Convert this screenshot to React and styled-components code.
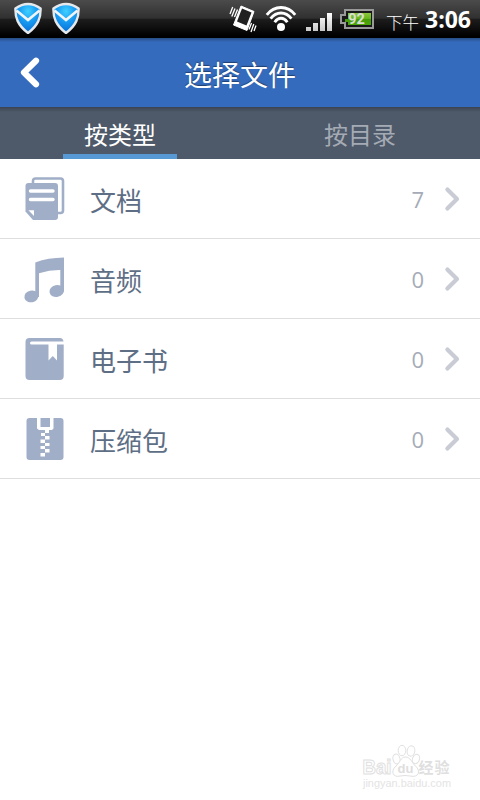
import styled, { createGlobalStyle } from "styled-components"

const files = [
    { name: "文档", count: 7, icon: DocumentIcon },
    { name: "音频", count: 0, icon: MusicIcon },
    { name: "电子书", count: 0, icon: BookIcon },
    { name: "压缩包", count: 0, icon: ZipIcon },
]

export default function App() {
    return (
        <>
            <GlobalStyle />
            <Screen>
                <StatusBar />

                <Header>
                    <BackButton aria-label="返回">
                        <svg width="22" height="34" viewBox="0 0 22 34">
                            <path d="M17 4.700L5 16.500L17 28.300" fill="none" stroke="#fff" strokeWidth="6.200" strokeLinecap="round" strokeLinejoin="round" />
                        </svg>
                    </BackButton>
                    <Title>选择文件</Title>
                </Header>

                <Tabs>
                    <Tab $active>按类型</Tab>
                    <Tab>按目录</Tab>
                </Tabs>

                <FileList>
                    {files.map(({ name, count, icon: Icon }) => (
                        <FileRow key={name}>
                            <Icon />
                            <FileName>{name}</FileName>
                            <FileCount>{count}</FileCount>
                            <Chevron />
                        </FileRow>
                    ))}
                </FileList>

                <Watermark />
            </Screen>
        </>
    )
}

function StatusBar() {
    return (
        <StatusRow>
            <Notifications>
                <Shield id="shieldA" />
                <Shield id="shieldB" />
            </Notifications>
            <VibrateIcon />
            <WifiIcon />
            <SignalIcon />
            <Battery />
            <Period>下午</Period>
            <Clock>3:06</Clock>
        </StatusRow>
    )
}

function Shield({ id }) {
    return (
        <svg width="30" height="32" viewBox="0 0 30 32">
            <defs>
                <radialGradient id={id} cx="50%" cy="25%" r="65%">
                    <stop offset="0" stopColor="#3fd0ff" />
                    <stop offset="0.5" stopColor="#1aa0f5" />
                    <stop offset="1" stopColor="#0a78dc" />
                </radialGradient>
            </defs>
            <path
                d="M15 2C11 2 6.500 3.500 2.400 6.500C2.200 15.500 4.500 23 15 31C25.500 23 27.800 15.500 27.600 6.500C23.500 3.500 19 2 15 2Z"
                fill={`url(#${id})`} stroke="#e6e9ec" strokeWidth="2.400" strokeLinejoin="round"
            />
            <path d="M3.500 8.500L15 18L26.500 8.500" fill="none" stroke="#f2f5f7" strokeWidth="2.600" />
        </svg>
    )
}

function VibrateIcon() {
    return (
        <svg width="28" height="28" viewBox="0 0 28 28">
            <path d="M12 1L25 6.500L18 25.500L4.500 20Z" fill="#fff" stroke="#fff" strokeWidth="1" strokeLinejoin="round" />
            <path d="M13 3.500L22.500 7.600L17.500 20.500L8 16.500Z" fill="#202020" />
            <path d="M3.700 2L1 9M6 3.500L2.800 11.500M8.500 4.500L5.500 12M22.500 18L20 24.500M24.800 19L22 27M27 20.500L25 26" fill="none" stroke="#fff" strokeWidth="1.300" />
        </svg>
    )
}

function WifiIcon() {
    return (
        <svg width="32" height="28" viewBox="0 0 32 28">
            <g fill="none" stroke="#fff" strokeWidth="2.900">
                <path d="M1.800 9.800C9.500 .1 22.500 .1 30.200 9.800" />
                <path d="M5.600 13.600C11.500 6.100 20.500 6.100 26.400 13.600" />
                <path d="M9.700 17.200C13.200 12 18.800 12 22.300 17.200" />
            </g>
            <circle cx="16" cy="22" r="4" fill="#fff" />
        </svg>
    )
}

function SignalIcon() {
    return (
        <svg width="28" height="20" viewBox="0 0 28 20">
            <defs>
                <linearGradient id="bars" x1="0" x2="0" y1="0" y2="1">
                    <stop offset="0" stopColor="#fff" />
                    <stop offset="1" stopColor="#c8c8c8" />
                </linearGradient>
            </defs>
            <path d="M1 15h5v4h-5zM8 11h5v8h-5zM15 6h5v13h-5zM22 1h5v18h-5z" fill="url(#bars)" />
        </svg>
    )
}

function Battery() {
    return (
        <svg width="34" height="20" viewBox="0 0 34 20">
            <defs>
                <linearGradient id="charge" x1="0" x2="0" y1="0" y2="1">
                    <stop offset="0" stopColor="#8cc63f" />
                    <stop offset="0.48" stopColor="#64b51b" />
                    <stop offset="0.5" stopColor="#469b08" />
                    <stop offset="1" stopColor="#4aa70a" />
                </linearGradient>
            </defs>
            <path d="M5 1H33V19H5V14H1V6H5Z" fill="#181818" stroke="#999" strokeWidth="2" />
            <path d="M8 4H31V16H8V13H5V10H8Z" fill="url(#charge)" />
            <text x="16.500" y="15" textAnchor="middle" fontFamily="Roboto, sans-serif" fontSize="14.500" fontWeight="700" fill="#d8ddd4">92</text>
        </svg>
    )
}

function DocumentIcon() {
    return (
        <FileIcon viewBox="0 0 42 44">
            <path d="M9 6V4Q9 1.500 11.500 1.500H36.500Q39 1.500 39 4V33.500Q39 36 36.500 36H34" fill="none" stroke="#a1aec7" strokeWidth="2.600" />
            <path d="M4.500 6H31Q34 6 34 9V40Q34 43 31 43H9L1.500 34.500V9Q1.500 6 4.500 6Z" />
            <path d="M6.500 14H29M6.500 22.500H29" stroke="#fff" strokeWidth="3.400" strokeLinecap="round" />
            <path d="M4.500 33.200H10V39Z" fill="#fff" />
        </FileIcon>
    )
}

function MusicIcon() {
    return (
        <FileIcon viewBox="0 0 42 44">
            <path d="M11.300 5.500Q24 .8 40 .6V34.500H36.300V13Q26 12.800 15 16.200V40H11.300Z" />
            <ellipse cx="7.400" cy="39.400" rx="7.100" ry="5.900" transform="rotate(-12 7.400 39.400)" />
            <ellipse cx="32.700" cy="34" rx="7.300" ry="5.900" transform="rotate(-12 32.700 34)" />
        </FileIcon>
    )
}

function BookIcon() {
    return (
        <FileIcon viewBox="0 0 42 44">
            <path d="M5.500 1H36Q39 1 39.500 4.500H7.500Q6 4.500 6 6Q6 7.500 7.500 7.500H24.500V23.500L28.800 19L33 23.500V7.500H39.700V39Q39.700 43 35.700 43H5.500Q1.500 43 1.500 39V5Q1.500 1 5.500 1Z" />
        </FileIcon>
    )
}

function ZipIcon() {
    return (
        <FileIcon viewBox="0 0 42 44">
            <rect x="2.500" y="1" width="37" height="42" rx="3" />
            <path d="M13 1H16.500V10H26V1H29.500V11.500L28 13H25V16H21V13H15L13 11.500Z" fill="#fff" />
            <path d="M21 13h4v3h-4zM17 16h4v3h-4zM21 19h4.500v3.500h-4.500zM16.500 22.500h4.500v3.500h-4.500zM21 26h4.500v3h-4.500zM16.500 29h4.500v3h-4.500zM21 32h4.500v3.500h-4.500zM16.500 36h4.500v3.500h-4.500z" fill="#fff" />
        </FileIcon>
    )
}

function Chevron() {
    return (
        <svg width="16" height="26" viewBox="0 0 16 26">
            <path d="M3.400 3.400L13 13L3.400 22.600" fill="none" stroke="#c9ccd4" strokeWidth="4.200" strokeLinecap="round" strokeLinejoin="round" />
        </svg>
    )
}

function Watermark() {
    return (
        <Mark width="94" height="50" viewBox="0 0 94 50">
            <g fill="#fff" stroke="#e0e0e0" strokeWidth="1">
                <text x="3.500" y="32.500" fontSize="20" fontWeight="700" textLength="29" lengthAdjust="spacingAndGlyphs">Bai</text>
                <ellipse cx="37.500" cy="18" rx="3.500" ry="5" transform="rotate(-15 37.500 18)" />
                <ellipse cx="43" cy="9.500" rx="3.800" ry="5.200" />
                <ellipse cx="52" cy="10" rx="3.800" ry="5.200" transform="rotate(12 52 10)" />
                <ellipse cx="57" cy="18" rx="3.500" ry="4.800" transform="rotate(20 57 18)" />
                <path d="M46.500 16C41.500 16 41 22 37 25C31 30 34 37 41 35Q46 34 51 35C60 37 62 30 56.500 25C53 22 51.500 16 46.500 16Z" />
            </g>
            <text x="59.500" y="31.500" fontSize="15" fontWeight="700" textLength="31" fill="#dfdfdf">经验</text>
            <text x="46.500" y="32" textAnchor="middle" fontSize="13" fontWeight="700" fill="#dedede">du</text>
            <text x="4" y="45.500" fontSize="10" textLength="88" lengthAdjust="spacingAndGlyphs" fill="#e4e4e4">jingyan.baidu.com</text>
        </Mark>
    )
}

const GlobalStyle = createGlobalStyle`
    * {
        box-sizing: border-box;
    }

    body {
        margin: 0;
        background: #fff;
        font-family: "Open Sans", "Noto Sans CJK SC", sans-serif;
    }

    svg {
        display: block;
        flex-shrink: 0;
    }
`

const Screen = styled.main`
    display: flex;
    flex-direction: column;
    width: 480px;
    height: 800px;
    background: #fff;
    overflow: hidden;
`

const StatusRow = styled.div`
    display: flex;
    align-items: center;
    flex-shrink: 0;
    height: 38px;
    padding: 0 9px 0 13px;
    background: linear-gradient(#4b4b4b, #303030 48%, #1d1d1d 50%, #000 95%);
    color: #fff;

    > svg:nth-of-type(2) {
        margin: 0 8px;
    }

    > svg:nth-of-type(3) {
        margin: 5px 7px 0 0;
    }
`

const Notifications = styled.div`
    display: flex;
    gap: 8px;
    height: 35px;
    margin-right: auto;
`

const Period = styled.span`
    margin: 7px 6px 0 12px;
    font-size: 16.500px;
    font-weight: 300;
    line-height: 24px;
    white-space: nowrap;
`

const Clock = styled.span`
    font-family: "Open Sans", sans-serif;
    font-size: 23px;
    font-weight: 700;
    line-height: 34px;
`

const Header = styled.header`
    display: grid;
    grid-template-columns: 60px 1fr 60px;
    align-items: center;
    flex-shrink: 0;
    height: 69px;
    background: linear-gradient(#264d85, #356bbc 4px);
    color: #fff;
`

const BackButton = styled.button`
    display: flex;
    justify-content: center;
    padding: 0;
    border: 0;
    background: none;
`

const Title = styled.h1`
    margin: 0;
    padding-top: 4px;
    font-size: 28px;
    font-weight: 400;
    line-height: 40px;
    text-align: center;
    text-shadow: 0 -1px 1px rgba(0, 0, 0, 0.4);
`

const Tabs = styled.nav`
    display: grid;
    grid-template-columns: 1fr 1fr;
    justify-items: center;
    flex-shrink: 0;
    height: 52px;
    background: linear-gradient(#3c4451, #4e5969 5px);
`

const Tab = styled.div`
    width: 114px;
    height: 52px;
    padding-top: 3px;
    border-bottom: 5px solid ${({ $active }) => ($active ? "#5799d4" : "transparent")};
    color: ${({ $active }) => ($active ? "#fff" : "#a5abb5")};
    font-size: 24px;
    line-height: 50px;
    text-align: center;
`

const FileList = styled.ul`
    margin: 0;
    padding: 0;
    list-style: none;
`

const FileRow = styled.li`
    display: flex;
    align-items: center;
    height: 80px;
    padding: 0 20px 0 24px;
    border-bottom: 1px solid #dedede;
`

const FileIcon = styled.svg`
    width: 42px;
    height: 44px;
    fill: #a1aec7;
    overflow: visible;
`

const FileName = styled.span`
    flex: 1;
    padding: 4px 0 0 24px;
    color: #5e6e85;
    font-size: 26px;
    line-height: 40px;
`

const FileCount = styled.span`
    margin-right: 20px;
    color: #a5acb8;
    font-size: 22px;
    line-height: 30px;
`

const Mark = styled.svg`
    align-self: flex-end;
    margin: auto 27px 9px 0;
    font-family: "Liberation Sans", "Noto Sans CJK SC", sans-serif;
`
